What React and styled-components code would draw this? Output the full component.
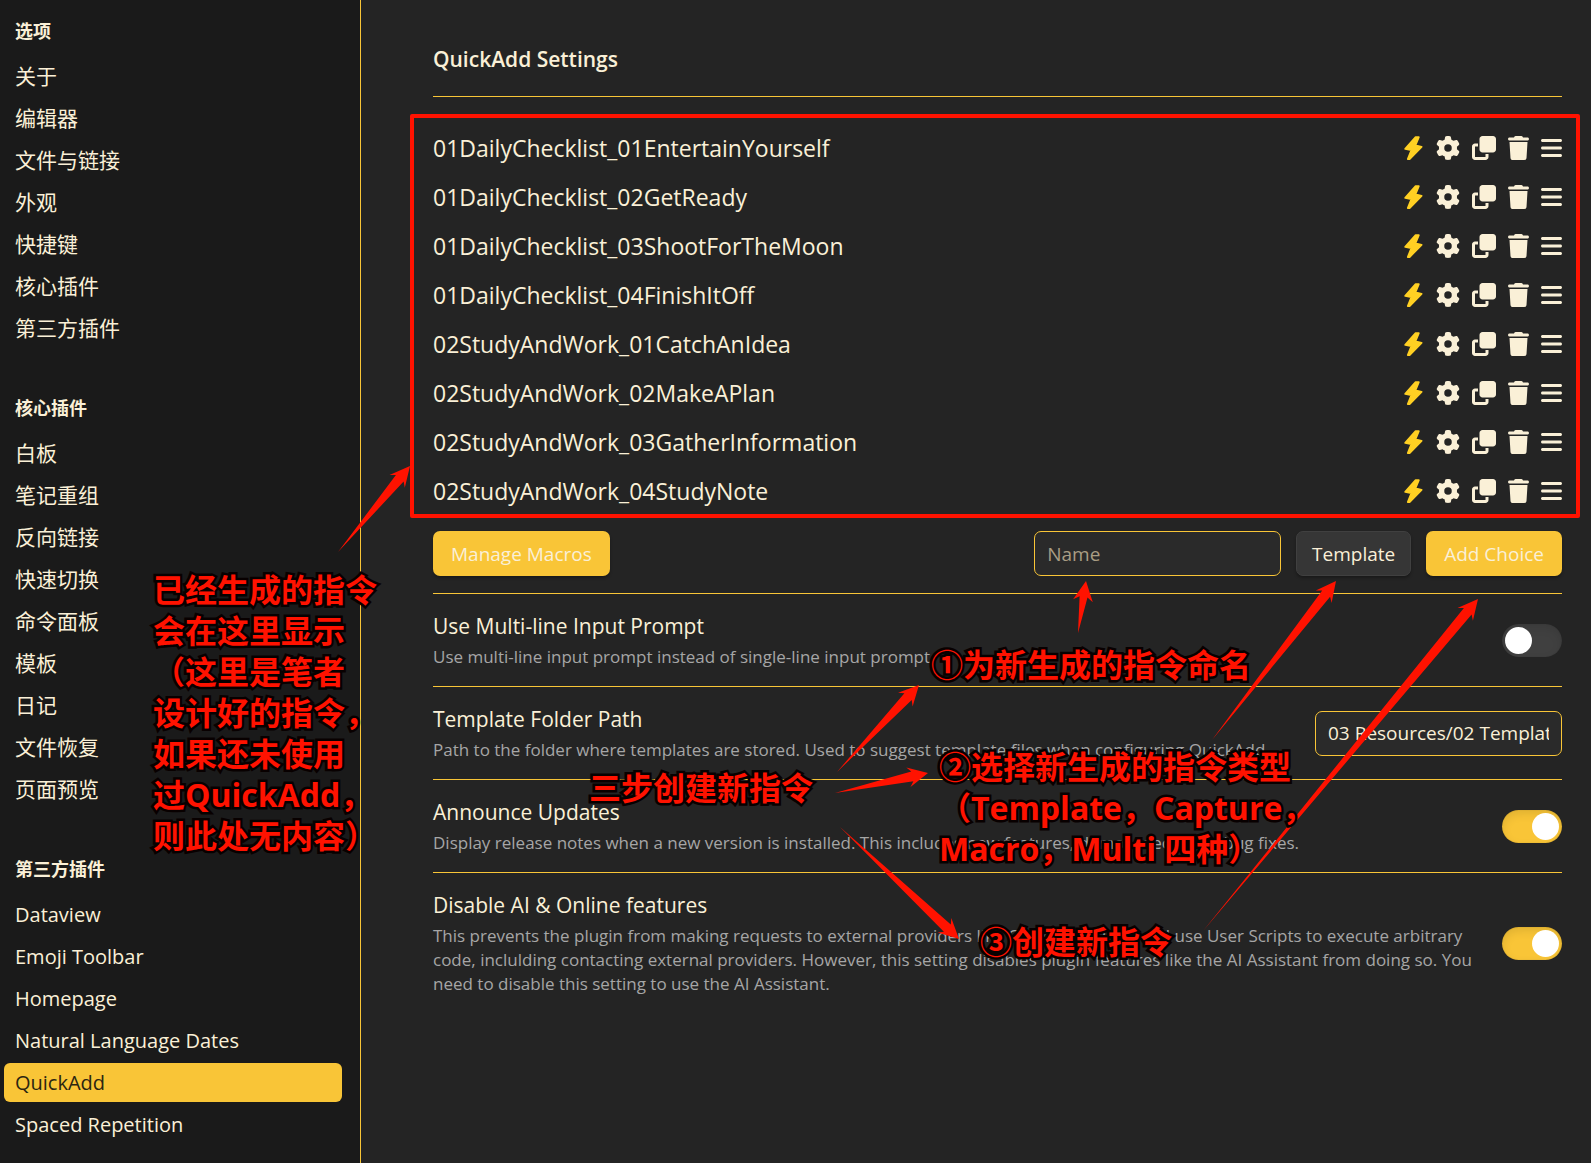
import React from "react";
import styled, { createGlobalStyle } from "styled-components";
import { FaGear, FaClone, FaTrash, FaBars } from "react-icons/fa6";

const color = {
  main: "#242424",
  side: "#1a1a1a",
  text: "#faf0d7",
  muted: "#a6a6a6",
  accent: "#f9c537",
  field: "#2a2a2a",
  red: "#ff1200",
};

const GlobalStyle = createGlobalStyle`
  *, *::before, *::after { box-sizing: border-box; }
  body {
    margin: 0;
    background: ${color.main};
    color: ${color.text};
    font-family: "Open Sans", "Noto Sans CJK SC", sans-serif;
    font-size: 19px;
  }
  button, input, select { font: inherit; color: inherit; }
`;

const Page = styled.div`
  position: relative;
  display: grid;
  grid-template-columns: 361px minmax(0, 1fr);
  min-height: 100vh;
  overflow: hidden;
`;

const Sidebar = styled.nav`
  display: flex;
  flex-direction: column;
  gap: 48px;
  padding: 19px 18px 0 4px;
  background: ${color.side};
  border-right: 1px solid ${color.accent};
`;

const NavTitle = styled.h2`
  margin: 0 0 14px;
  padding-left: 11px;
  font-size: 18px;
  line-height: 24px;
  font-weight: 700;
`;

const NavList = styled.div`
  display: flex;
  flex-direction: column;
  gap: 3px;
`;

const NavItem = styled.a`
  height: 39px;
  padding-left: 11px;
  border-radius: 6px;
  font-size: ${(p) => (p.$latin ? "20px" : "21px")};
  line-height: 39px;
  text-decoration: none;
  color: ${(p) => (p.$active ? "#2c2611" : color.text)};
  background: ${(p) => (p.$active ? color.accent : "transparent")};
`;

const Main = styled.main`
  padding: 0 29px 48px 72px;
`;

const Heading = styled.h1`
  margin: 0;
  padding: 41px 0 19px;
  border-bottom: 1px solid ${color.accent};
  font-size: 21px;
  line-height: 36px;
  font-weight: 600;
`;

const ChoiceList = styled.ul`
  position: relative;
  margin: 26px 0 16px;
  padding: 0;
  list-style: none;
  &::after {
    content: "";
    position: absolute;
    inset: -9px -18px -3px -23px;
    border: 4px solid ${color.red};
    border-radius: 2px;
    pointer-events: none;
  }
`;

const Choice = styled.li`
  display: flex;
  align-items: center;
  justify-content: space-between;
  height: 49px;
  font-size: 23px;
`;

const Actions = styled.div`
  display: flex;
  align-items: center;
  gap: 12px;
`;

const IconButton = styled.button`
  display: flex;
  padding: 0;
  border: 0;
  background: none;
  svg {
    display: block;
    flex: none;
    width: ${(p) => p.$w}px;
    height: 24px;
  }
`;

const AddRow = styled.div`
  display: flex;
  gap: 15px;
  padding-bottom: 17px;
`;

const Spacer = styled.div`
  flex: 1;
`;

const Button = styled.button`
  height: 45px;
  padding: 0 18px;
  border: 0;
  border-radius: 7px;
  background: ${color.accent};
  box-shadow: 0 2px 3px rgba(0, 0, 0, 0.3);
`;

const TypeSelect = styled.select`
  appearance: none;
  width: 115px;
  height: 45px;
  padding: 0 12px;
  border: 1px solid #404040;
  border-radius: 7px;
  background: #363636;
  text-align: center;
  box-shadow: 0 2px 3px rgba(0, 0, 0, 0.3);
`;

const Field = styled.input`
  width: 247px;
  height: 45px;
  padding: 0 12px;
  border: 1px solid ${color.accent};
  border-radius: 7px;
  background: ${color.field};
  &::placeholder { color: #a99d84; opacity: 1; }
`;

const Setting = styled.section`
  display: flex;
  align-items: center;
  justify-content: space-between;
  gap: 24px;
  padding: 17px 0;
  border-top: 1px solid ${color.accent};
`;

const SettingName = styled.label`
  display: block;
  font-size: 21px;
  line-height: 30px;
`;

const SettingText = styled.p`
  margin: 4px 0 0;
  font-size: 17px;
  line-height: 24px;
  color: ${color.muted};
`;

const Toggle = styled.input.attrs({ type: "checkbox", role: "switch" })`
  appearance: none;
  flex: none;
  width: 60px;
  height: 33px;
  margin: 0;
  padding: 3px;
  border-radius: 17px;
  background: #404040;
  box-shadow: inset 0 4px 10px rgba(0, 0, 0, 0.1), inset 0 0 1px rgba(0, 0, 0, 0.3);
  &::before {
    content: "";
    display: block;
    width: 27px;
    height: 27px;
    border-radius: 50%;
    background: #fff;
  }
  &:checked { background: ${color.accent}; }
  &:checked::before { margin-left: 27px; }
`;

const Note = styled.p`
  position: absolute;
  left: ${(p) => p.$x}px;
  top: ${(p) => p.$y}px;
  margin: 0;
  color: ${color.red};
  font-size: 32px;
  line-height: 41px;
  font-weight: 700;
  white-space: pre;
  pointer-events: none;
  -webkit-text-stroke: 5px #080000;
  paint-order: stroke fill;
`;

const Arrows = styled.svg`
  position: absolute;
  left: 0;
  top: 0;
  pointer-events: none;
`;

const BoltIcon = () => (
  <svg viewBox="0 0 20 24" aria-hidden="true">
    <path
      d="M11.6 1.2h3.2L11.4 9.4l6.2 1.4L5.6 23H3.8l3.6-9-6.2-1.2z"
      fill="#ffd023"
      stroke="#ffd023"
      strokeWidth="1.8"
      strokeLinejoin="round"
    />
  </svg>
);

const navGroups = [
  { title: "选项", items: ["关于", "编辑器", "文件与链接", "外观", "快捷键", "核心插件", "第三方插件"] },
  {
    title: "核心插件",
    items: ["白板", "笔记重组", "反向链接", "快速切换", "命令面板", "模板", "日记", "文件恢复", "页面预览"],
  },
  {
    title: "第三方插件",
    latin: true,
    items: ["Dataview", "Emoji Toolbar", "Homepage", "Natural Language Dates", "QuickAdd", "Spaced Repetition"],
  },
];

const choices = [
  "01DailyChecklist_01EntertainYourself",
  "01DailyChecklist_02GetReady",
  "01DailyChecklist_03ShootForTheMoon",
  "01DailyChecklist_04FinishItOff",
  "02StudyAndWork_01CatchAnIdea",
  "02StudyAndWork_02MakeAPlan",
  "02StudyAndWork_03GatherInformation",
  "02StudyAndWork_04StudyNote",
];

const arrows = [
  [338, 552, 410, 466, 5],
  [1078, 633, 1086, 581, 4],
  [1212, 740, 1336, 581, 5],
  [1203, 931, 1478, 599, 5],
  [837, 772, 919, 685, 5],
  [835, 793, 928, 773, 5],
  [840, 827, 959, 939, 5],
];

// Tapered arrow: a point at the tail, widening up to a barbed head.
function arrowPath([x1, y1, x2, y2, half]) {
  const len = Math.hypot(x2 - x1, y2 - y1);
  const ux = (x2 - x1) / len;
  const uy = (y2 - y1) / len;
  const at = (back, side) =>
    `${(x2 - ux * back - uy * side).toFixed(1)} ${(y2 - uy * back + ux * side).toFixed(1)}`;
  return `M${x1} ${y1}L${at(16, half)}L${at(20, 10)}L${x2} ${y2}L${at(20, -10)}L${at(16, -half)}Z`;
}

const settings = [
  {
    id: "multiline",
    name: "Use Multi-line Input Prompt",
    text: "Use multi-line input prompt instead of single-line input prompt",
    on: false,
  },
  {
    id: "folder",
    name: "Template Folder Path",
    text: "Path to the folder where templates are stored. Used to suggest template files when configuring QuickAdd.",
    value: "03 Resources/02 Templates",
  },
  {
    id: "updates",
    name: "Announce Updates",
    text: "Display release notes when a new version is installed. This includes new features, demo videos, and bug fixes.",
    on: true,
  },
  {
    id: "ai",
    name: "Disable AI & Online features",
    text: "This prevents the plugin from making requests to external providers like OpenAI. You can still use User Scripts to execute arbitrary code, inclulding contacting external providers. However, this setting disables plugin features like the AI Assistant from doing so. You need to disable this setting to use the AI Assistant.",
    on: true,
  },
];

export default function App() {
  return (
    <Page>
      <GlobalStyle />
      <Sidebar>
        {navGroups.map((g) => (
          <div key={g.title}>
            <NavTitle>{g.title}</NavTitle>
            <NavList>
              {g.items.map((item) => (
                <NavItem key={item} href="#" $latin={g.latin} $active={item === "QuickAdd"}>
                  {item}
                </NavItem>
              ))}
            </NavList>
          </div>
        ))}
      </Sidebar>
      <Main>
        <Heading>QuickAdd Settings</Heading>
        <ChoiceList>
          {choices.map((name) => (
            <Choice key={name}>
              <span>{name}</span>
              <Actions>
                <IconButton $w={20} aria-label="Command"><BoltIcon /></IconButton>
                <IconButton $w={24} aria-label="Configure"><FaGear /></IconButton>
                <IconButton $w={24} aria-label="Duplicate"><FaClone /></IconButton>
                <IconButton $w={21} aria-label="Delete"><FaTrash /></IconButton>
                <IconButton $w={21} aria-label="Reorder"><FaBars /></IconButton>
              </Actions>
            </Choice>
          ))}
        </ChoiceList>
        <AddRow>
          <Button>Manage Macros</Button>
          <Spacer />
          <Field placeholder="Name" aria-label="Name" />
          <TypeSelect aria-label="Choice type" defaultValue="Template">
            <option>Template</option>
            <option>Capture</option>
            <option>Macro</option>
            <option>Multi</option>
          </TypeSelect>
          <Button>Add Choice</Button>
        </AddRow>
        {settings.map((s) => (
          <Setting key={s.id}>
            <div>
              <SettingName htmlFor={s.id}>{s.name}</SettingName>
              <SettingText>{s.text}</SettingText>
            </div>
            {s.value ? <Field id={s.id} defaultValue={s.value} /> : <Toggle id={s.id} defaultChecked={s.on} />}
          </Setting>
        ))}
      </Main>
      <Arrows width="1591" height="1163" viewBox="0 0 1591 1163" aria-hidden="true">
        {arrows.map((a) => (
          <path key={a.join()} d={arrowPath(a)} fill={color.red} />
        ))}
      </Arrows>
      <Note $x={153} $y={569}>
        {"已经生成的指令\n会在这里显示\n（这里是笔者\n设计好的指令，\n如果还未使用\n过QuickAdd，\n则此处无内容）"}
      </Note>
      <Note $x={589} $y={767}>三步创建新指令</Note>
      <Note $x={931} $y={644}>①为新生成的指令命名</Note>
      <Note $x={939} $y={746}>
        {"②选择新生成的指令类型\n（Template，Capture，\nMacro，Multi 四种）"}
      </Note>
      <Note $x={980} $y={921}>③创建新指令</Note>
    </Page>
  );
}
